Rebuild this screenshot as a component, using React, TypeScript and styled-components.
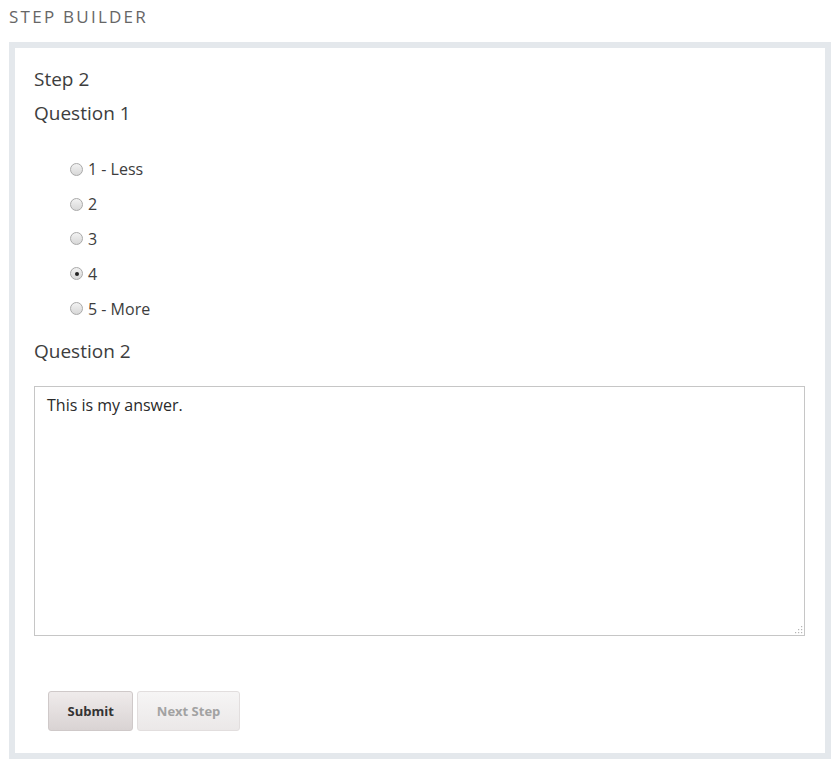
import React, { useState } from "react";
import styled, { createGlobalStyle } from "styled-components";

const Global = createGlobalStyle`
  html, body { margin: 0; padding: 0; background: #fff; }
  body { font-family: "Open Sans", "Noto Sans", sans-serif; color: #3d3d3d; }
  * { box-sizing: border-box; }
`;

const Page = styled.div`
  padding: 5px 8px 0 9px;
  width: 838px;
`;

const Header = styled.h1`
  margin: 0 0 14px 0;
  font-size: 17px;
  line-height: 23px;
  font-weight: 400;
  letter-spacing: 2.25px;
  text-transform: uppercase;
  color: #666;
`;

const Panel = styled.div`
  width: 822px;
  border: 6px solid #e4e8ec;
  padding: 18px 20px 22px 19px;
  display: flex;
  flex-direction: column;
`;

const StepTitle = styled.div`
  font-size: 19px;
  line-height: 26px;
  color: #3d3d3d;
`;

const QuestionTitle = styled.div<{ $top: number }>`
  font-size: 19px;
  line-height: 26px;
  margin-top: ${(p) => p.$top}px;
  color: #3d3d3d;
`;

const RadioList = styled.div`
  display: flex;
  flex-direction: column;
  margin: 26px 0 12px 36px;
`;

const RadioRow = styled.label`
  display: flex;
  align-items: center;
  height: 34.8px;
  font-size: 16px;
  color: #3d3d3d;
  cursor: pointer;
`;

const Radio = styled.input`
  appearance: none;
  -webkit-appearance: none;
  width: 13px;
  height: 13px;
  margin: 0 5px 0 0;
  border-radius: 50%;
  border: 1px solid #a9a9a9;
  background: linear-gradient(180deg, #f2f2f2 0%, #e2e2e2 60%, #d8d8d8 100%);
  position: relative;
  &:checked::after {
    content: "";
    position: absolute;
    left: 3.5px;
    top: 3.5px;
    width: 4px;
    height: 4px;
    border-radius: 50%;
    background: #222;
  }
`;

const AnswerWrap = styled.div`
  position: relative;
  margin-top: 22px;
  width: 771px;
  height: 250px;
`;

const Answer = styled.textarea`
  width: 100%;
  height: 100%;
  border: 1px solid #c6c6c6;
  padding: 7px 12px;
  font-family: "Open Sans", "Noto Sans", sans-serif;
  font-size: 16px;
  line-height: 22px;
  color: #2a2a2a;
  resize: none;
  outline: none;
  display: block;
`;

const Grip = styled.svg`
  position: absolute;
  right: 2px;
  bottom: 2px;
  width: 9px;
  height: 9px;
  pointer-events: none;
`;

const ButtonRow = styled.div`
  display: flex;
  gap: 4px;
  margin: 55px 0 0 14px;
`;

const Button = styled.button<{ $disabled?: boolean }>`
  height: 40px;
  padding: 0 18.5px;
  border-radius: 3px;
  border: 1px solid ${(p) => (p.$disabled ? "#e2dede" : "#cfc9c9")};
  background: ${(p) =>
    p.$disabled
      ? "linear-gradient(180deg, #f6f5f5 0%, #ebe8e8 100%)"
      : "linear-gradient(180deg, #efebeb 0%, #d9d3d3 100%)"};
  font-family: "Open Sans", "Noto Sans", sans-serif;
  font-weight: 700;
  font-size: 13px;
  color: ${(p) => (p.$disabled ? "#a2a2a2" : "#333")};
  cursor: ${(p) => (p.$disabled ? "default" : "pointer")};
`;

const options = ["1 - Less", "2", "3", "4", "5 - More"];

const gripDots: [number, number][] = [
  [7, 1],
  [7, 4],
  [4, 4],
  [7, 7],
  [4, 7],
  [1, 7],
];

export default function App() {
  const [choice, setChoice] = useState("4");
  const [text, setText] = useState("This is my answer.");
  return (
    <>
      <Global />
      <Page>
        <Header>Step Builder</Header>
        <Panel>
          <StepTitle>Step 2</StepTitle>
          <QuestionTitle $top={8}>Question 1</QuestionTitle>
          <RadioList>
            {options.map((o) => (
              <RadioRow key={o}>
                <Radio
                  type="radio"
                  name="q1"
                  checked={choice === o}
                  onChange={() => setChoice(o)}
                />
                {o}
              </RadioRow>
            ))}
          </RadioList>
          <QuestionTitle $top={0}>Question 2</QuestionTitle>
          <AnswerWrap>
            <Answer value={text} onChange={(e) => setText(e.target.value)} />
            <Grip viewBox="0 0 9 9">
              {gripDots.map(([x, y]) => (
                <rect key={`${x}-${y}`} x={x} y={y} width="1.2" height="1.2" fill="#b5b5b5" />
              ))}
            </Grip>
          </AnswerWrap>
          <ButtonRow>
            <Button>Submit</Button>
            <Button $disabled disabled>
              Next Step
            </Button>
          </ButtonRow>
        </Panel>
      </Page>
    </>
  );
}
